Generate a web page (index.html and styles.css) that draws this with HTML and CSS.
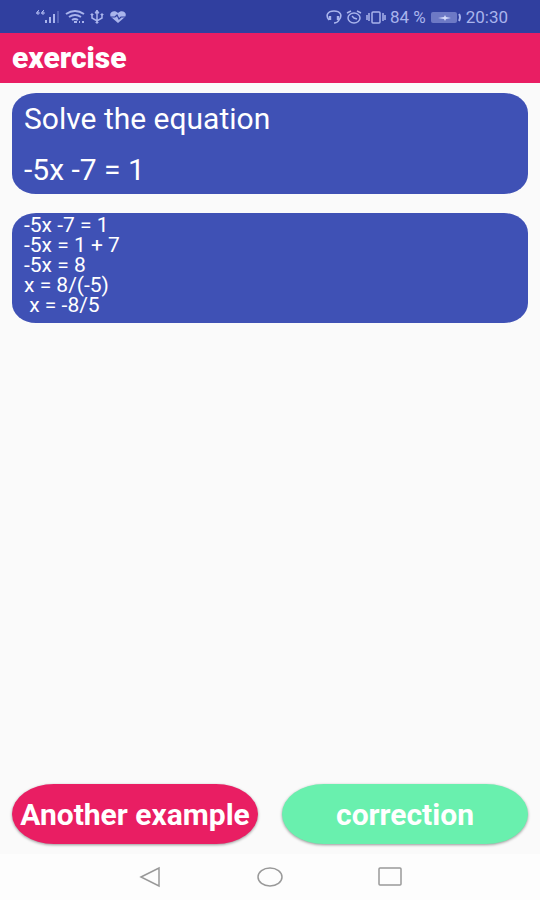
FILE: index.html
```html
<!DOCTYPE html>
<html lang="en">
<head>
    <meta charset="UTF-8">
    <meta name="viewport" content="width=device-width, initial-scale=1">
    <title>exercise</title>
    <link rel="stylesheet" href="styles.css">
</head>
<body>

<div class="status-bar">
    <div class="status-group status-left">
        <!-- signal -->
        <svg width="24" height="16" viewBox="0 0 24 16">
            <path d="M1 5V3l2-2M1 3h2v2H1zM6 5V3l2-2M6 3h2v2H6z" fill="none" stroke="currentColor"/>
            <path d="M9 11h2v3H9zM13 8h2v6h-2zM17 5h2v9h-2z" fill="currentColor"/>
            <path d="M21 2h2v12h-2z" fill="currentColor" opacity=".3"/>
        </svg>
        <!-- wifi -->
        <svg width="20" height="16" viewBox="0 0 20 16" fill="none" stroke="currentColor" stroke-width="2">
            <path d="M1 5Q10-1 19 5M4 8q6-4 12 0M7 11q3-2 6 0"/>
            <path d="M9 13h3M14 13h1M17 13h2"/>
        </svg>
        <!-- usb -->
        <svg width="14" height="16" viewBox="0 0 14 16" fill="none" stroke="currentColor" stroke-width="1.5">
            <path d="M7 2v12M2 6v3l5 3 5-3V6"/>
            <path d="M5 4l2-3 2 3zM6 13h2v1H6zM1 5h2v1H1zM11 5h2v1h-2z" fill="currentColor" stroke-width="1"/>
        </svg>
        <!-- health -->
        <svg width="18" height="16" viewBox="0 0 18 16">
            <path d="M9 14L2 8C-1 4 5 0 9 4c4-4 10 0 7 4z" fill="currentColor"/>
            <path d="M2 8h4l2-2 2 4 2-2h4" fill="none" stroke="#303f9f" stroke-width="1.2"/>
        </svg>
    </div>
    <div class="status-group">
        <!-- headset -->
        <svg width="16" height="16" viewBox="0 0 16 16" fill="none" stroke="currentColor" stroke-width="1.6">
            <path d="M3 11C-1 6 2 2 8 2s9 4 5 9c-1 2-2 3-5 3"/>
            <path d="M4 7v4M12 7v4" stroke-width="2.4"/>
        </svg>
        <!-- alarm -->
        <svg width="16" height="16" viewBox="0 0 16 16" fill="none" stroke="currentColor" stroke-width="1.5">
            <ellipse cx="8" cy="9" rx="6" ry="5"/>
            <path d="M1 4l4-2M15 4l-4-2M6 7l2 2 3 1"/>
        </svg>
        <!-- vibrate -->
        <svg width="20" height="16" viewBox="0 0 20 16" fill="none" stroke="currentColor" stroke-width="1.5">
            <rect x="6" y="3" width="8" height="11" rx="1"/>
            <path d="M3 4v8M17 4v8M1 6v5M19 6v5"/>
        </svg>
        <span>84 %</span>
        <!-- battery -->
        <svg width="32" height="16" viewBox="0 0 32 16">
            <rect x="1" y="3" width="26" height="11" rx="2" fill="currentColor" opacity=".5"/>
            <path d="M8 9l6-1 1-2 1 2 5 1-5 1-1 2-1-2z" fill="#d5dbfa"/>
            <path d="M29 5q2 3 0 7" fill="none" stroke="currentColor" stroke-width="2"/>
        </svg>
        <span>20:30</span>
    </div>
</div>

<header class="toolbar">
    <h1>exercise</h1>
</header>

<main class="content">
    <section class="card question">
        <p>Solve the equation</p>
        <p>-5x -7 = 1</p>
    </section>
    <section class="card solution">-5x -7 = 1
-5x = 1 + 7
-5x = 8
x = 8/(-5)
 x = -8/5</section>
    <div class="actions">
        <button class="btn btn-another" type="button">Another example</button>
        <button class="btn btn-correction" type="button">correction</button>
    </div>
</main>

<nav class="nav-bar">
    <button type="button" aria-label="Back">
        <svg width="24" height="22" viewBox="0 0 24 22"><path d="M3 11L21 2v18z"/></svg>
    </button>
    <button type="button" aria-label="Home">
        <svg width="26" height="22" viewBox="0 0 26 22"><ellipse cx="13" cy="11" rx="12" ry="9"/></svg>
    </button>
    <button type="button" aria-label="Recent apps">
        <svg width="24" height="22" viewBox="0 0 24 22"><rect x="1" y="2" width="22" height="17" rx="1"/></svg>
    </button>
</nav>

</body>
</html>
```
FILE: styles.css
```css
* {
    box-sizing: border-box;
}
body {
    margin: 0;
    min-height: 100vh;
    display: flex;
    flex-direction: column;
    background-color: #fafafa;
    font-family: Roboto, "Liberation Sans", sans-serif;
    color: #fff;
}
h1, p {
    margin: 0;
}
svg {
    display: block;
    flex-shrink: 0;
}

/* status bar */
.status-bar {
    display: flex;
    justify-content: space-between;
    align-items: center;
    height: 33px;
    padding: 0 32px 0 36px;
    background-color: #303f9f;
    color: #a9b4ec;
    font-size: 17px;
}
.status-group {
    display: flex;
    align-items: center;
    gap: 4px;
}
.status-left {
    gap: 5px;
}

.toolbar {
    display: flex;
    align-items: center;
    height: 50px;
    padding: 0 12px;
    background-color: #e91e63;
}
.toolbar h1 {
    font-size: 30px;
    line-height: 32px;
    font-weight: 900;
}

/* cards */
.content {
    flex: 1;
    display: flex;
    flex-direction: column;
    gap: 19px;
    padding: 10px 12px;
}
.card {
    border-radius: 24px / 20px;
    padding: 0 12px;
    background-color: #3f51b5;
}
.question {
    display: grid;
    gap: 19px;
    padding-top: 10px;
    padding-bottom: 8px;
    font-size: 30px;
    line-height: 32px;
}
.solution {
    padding-top: 2px;
    padding-bottom: 8px;
    font-size: 21px;
    line-height: 20px;
    white-space: pre-wrap;
}

/* bottom buttons */
.actions {
    display: grid;
    grid-template-columns: 1fr 1fr;
    gap: 24px;
    margin-top: auto;
}
.btn {
    height: 60px;
    padding: 0;
    border: none;
    border-radius: 42px / 30px;
    box-shadow: 0 1px 3px rgba(0, 0, 0, 0.4);
    color: #fff;
    font-family: inherit;
    font-size: 30px;
    font-weight: 700;
    cursor: pointer;
}
.btn-another {
    background-color: #e91e63;
}
.btn-correction {
    background-color: #69f0ae;
}

/* system navigation */
.nav-bar {
    display: flex;
    justify-content: center;
    align-items: center;
    gap: 80px;
    height: 46px;
    background-color: #fdfdfd;
}
.nav-bar button {
    display: flex;
    justify-content: center;
    width: 40px;
    padding: 0;
    border: none;
    background: none;
    cursor: pointer;
}
.nav-bar svg {
    fill: none;
    stroke: #999;
    stroke-width: 1.5;
}
```
